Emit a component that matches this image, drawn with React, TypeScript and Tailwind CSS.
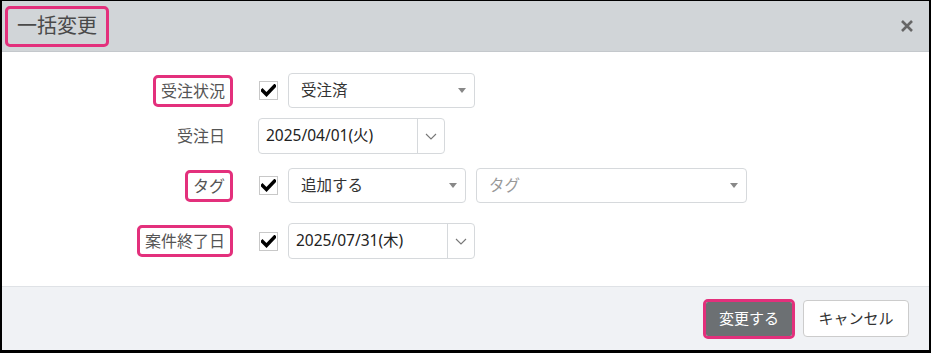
import React from "react";

const PINK = "border-[#e3307c]";

function Check() {
  return (
    <div className="w-[19px] h-[19px] border border-[#c8c8c8] bg-white flex items-center justify-center shrink-0">
      <svg width="15" height="13" viewBox="0 0 15 13">
        <path d="M1.5 6.5 L5.5 10.5 L13.5 2" fill="none" stroke="#000" strokeWidth="3.4" strokeLinecap="square" />
      </svg>
    </div>
  );
}

function Caret() {
  return (
    <svg width="8" height="5" viewBox="0 0 8 5" className="shrink-0">
      <path d="M0 0 H8 L4 5 Z" fill="#888" />
    </svg>
  );
}

function Select({ value, w, placeholder = false }: { value: string; w: string; placeholder?: boolean }) {
  return (
    <div className={`${w} h-[35px] border border-[#d6d9dc] rounded-[4px] bg-white flex items-center justify-between pl-3 pr-[8px]`}>
      <span className={`text-[15.5px] ${placeholder ? "text-[#999]" : "text-[#333]"}`}>{value}</span>
      <Caret />
    </div>
  );
}

function DateBox({ value }: { value: string }) {
  return (
    <div className="w-[187px] h-[36px] border border-[#d6d9dc] rounded-[4px] bg-white flex items-stretch">
      <div className="flex-1 flex items-center pl-[7px] text-[15.5px] text-[#222]">{value}</div>
      <div className="w-[27px] border-l border-[#d6d9dc] flex items-center justify-center">
        <svg width="12" height="7" viewBox="0 0 12 7">
          <path d="M1 1 L6 6 L11 1" fill="none" stroke="#777" strokeWidth="1.1" />
        </svg>
      </div>
    </div>
  );
}

function Label({ text, boxed }: { text: string; boxed?: boolean }) {
  return (
    <div className="w-[223px] flex justify-end shrink-0">
      {boxed ? (
        <span className={`-mx-2 px-[5px] py-[2px] border-[3px] ${PINK} rounded-[5px] text-[16px] text-[#555] leading-[22px]`}>{text}</span>
      ) : (
        <span className="text-[16px] text-[#555] leading-[22px]">{text}</span>
      )}
    </div>
  );
}

export default function App() {
  return (
    <div
      className="w-[931px] h-[353px] border-black border-t border-x-2 border-b-[3px] bg-white flex flex-col overflow-hidden"
      style={{ fontFamily: '"Noto Sans", "Noto Sans CJK JP", sans-serif' }}
    >
      {/* header */}
      <div className="h-[51px] bg-[#d1d5d8] border-b border-[#c4c8cc] flex items-center justify-between pl-[3px] pr-[15px] shrink-0">
        <span className={`border-[3px] ${PINK} rounded-[5px] px-[9px] pt-[1px] pb-[2px] text-[20px] leading-[32px] text-[#4a4a4a]`}>一括変更</span>
        <svg width="14" height="14" viewBox="0 0 14 14">
          <path d="M2 2 L12 12 M12 2 L2 12" stroke="#666" strokeWidth="2.6" />
        </svg>
      </div>

      {/* body */}
      <div className="flex-1 pt-[21px]">
        <div className="flex items-center h-[35px]">
          <Label text="受注状況" boxed />
          <div className="ml-[34px] mr-[10px]"><Check /></div>
          <Select value="受注済" w="w-[187px]" />
        </div>

        <div className="flex items-center h-[36px] mt-[10px]">
          <Label text="受注日" />
          <div className="ml-[33px]"><DateBox value="2025/04/01(火)" /></div>
        </div>

        <div className="flex items-center h-[35px] mt-[14px]">
          <Label text="タグ" boxed />
          <div className="ml-[34px] mr-[10px]"><Check /></div>
          <Select value="追加する" w="w-[178px]" />
          <div className="ml-[10px]">
            <Select value="タグ" w="w-[271px]" placeholder />
          </div>
        </div>

        <div className="flex items-center h-[36px] mt-[20px]">
          <Label text="案件終了日" boxed />
          <div className="ml-[34px] mr-[10px]"><Check /></div>
          <DateBox value="2025/07/31(木)" />
        </div>
      </div>

      {/* footer */}
      <div className="h-[64px] bg-[#f0f2f5] border-t border-[#dfe2e6] flex items-center justify-end gap-[8px] pr-[20px] shrink-0">
        <div className={`border-[3px] ${PINK} rounded-[5px]`}>
          <div className="w-[86px] h-[34px] bg-[#6c7073] rounded-[2px] text-white text-[15px] flex items-center justify-center">変更する</div>
        </div>
        <div className="w-[106px] h-[37px] bg-white border border-[#ccc] rounded-[4px] text-[15px] text-[#333] flex items-center justify-center">キャンセル</div>
      </div>
    </div>
  );
}
